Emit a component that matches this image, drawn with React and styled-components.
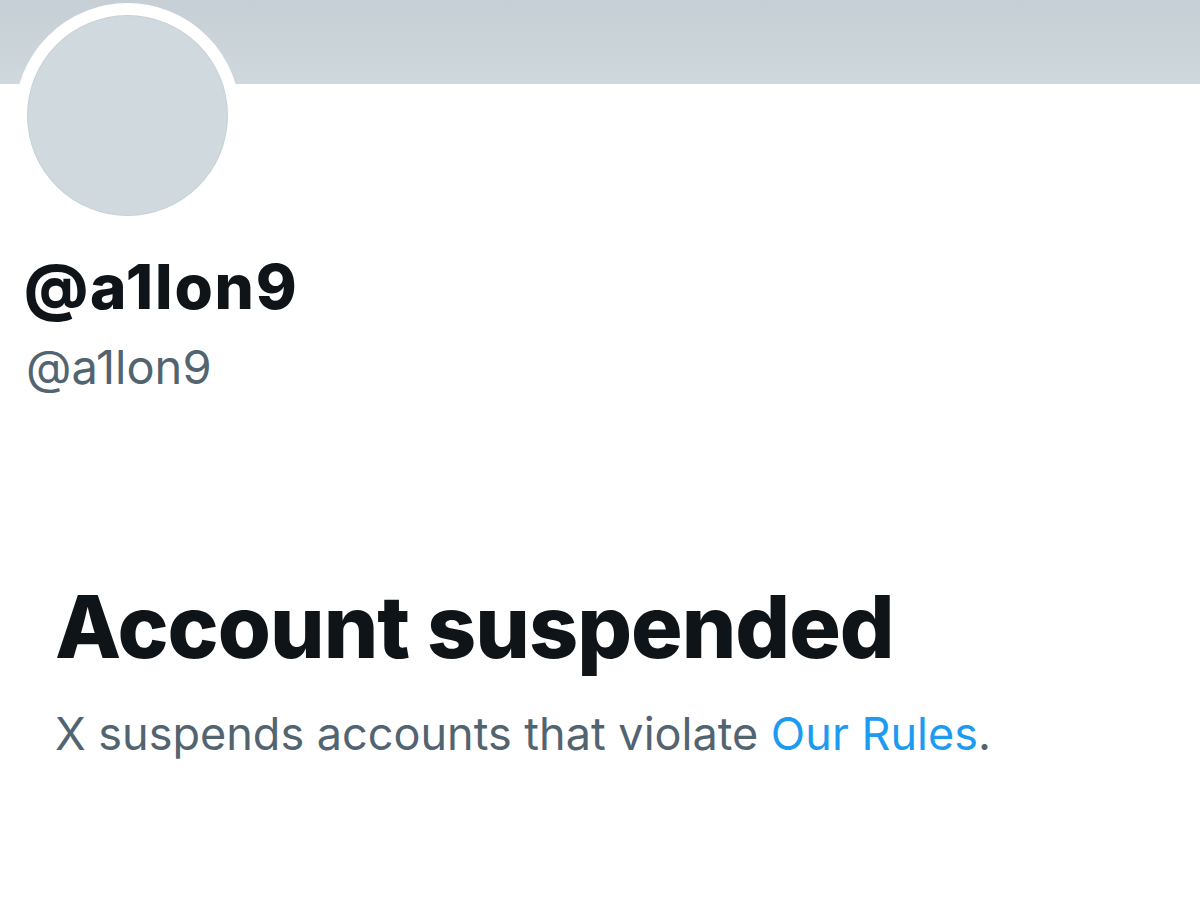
import React from "react";
import styled, { createGlobalStyle } from "styled-components";

const Global = createGlobalStyle`
  html, body { margin: 0; padding: 0; background: #ffffff; }
  body { font-family: Inter, "Noto Sans", "Liberation Sans", sans-serif; -webkit-font-smoothing: antialiased; }
`;

const Page = styled.div`
  width: 1200px;
  height: 910px;
  overflow: hidden;
  background: #ffffff;
  display: flex;
  flex-direction: column;
`;

const Banner = styled.div`
  height: 84px;
  background: linear-gradient(180deg, #c6cfd5 0%, #cfd8dd 100%);
  flex-shrink: 0;
`;

const Header = styled.div`
  display: flex;
  flex-direction: column;
  padding-left: 15px;
`;

const AvatarRing = styled.div`
  width: 201px;
  height: 201px;
  margin-top: -81px;
  border-radius: 50%;
  border: 12px solid #ffffff;
  background: #ffffff;
  position: relative;
`;

const Avatar = styled.div`
  width: 100%;
  height: 100%;
  border-radius: 50%;
  background: #cfd9de;
  box-shadow: inset 0 0 0 1px rgba(0, 0, 0, 0.04);
`;

const Names = styled.div`
  display: flex;
  flex-direction: column;
  padding-left: 12px;
  margin-top: 22px;
`;

const DisplayName = styled.div`
  font-size: 62px;
  font-weight: 800;
  color: #0f1419;
  line-height: 74px;
  letter-spacing: 1.8px;
  margin-left: -3px;
`;

const Handle = styled.div`
  font-size: 47px;
  font-weight: 400;
  color: #536471;
  line-height: 56px;
  margin-top: 15px;
  margin-left: -1px;
`;

const Notice = styled.div`
  display: flex;
  flex-direction: column;
  padding-left: 55px;
  margin-top: 182px;
`;

const Title = styled.h1`
  margin: 0;
  font-size: 86px;
  font-weight: 800;
  color: #0f1419;
  line-height: 100px;
  letter-spacing: -1px;
`;

const Message = styled.p`
  margin: 29px 0 0;
  font-size: 45px;
  font-weight: 400;
  color: #536471;
  line-height: 56px;
`;

const RulesLink = styled.a`
  color: #1d9bf0;
  text-decoration: none;
`;

export default function App() {
  return (
    <Page>
      <Global />
      <Banner />
      <Header>
        <AvatarRing>
          <Avatar />
        </AvatarRing>
        <Names>
          <DisplayName>@a1lon9</DisplayName>
          <Handle>@a1lon9</Handle>
        </Names>
      </Header>
      <Notice>
        <Title>Account suspended</Title>
        <Message>
          X suspends accounts that violate <RulesLink href="#">Our Rules</RulesLink>.
        </Message>
      </Notice>
    </Page>
  );
}
